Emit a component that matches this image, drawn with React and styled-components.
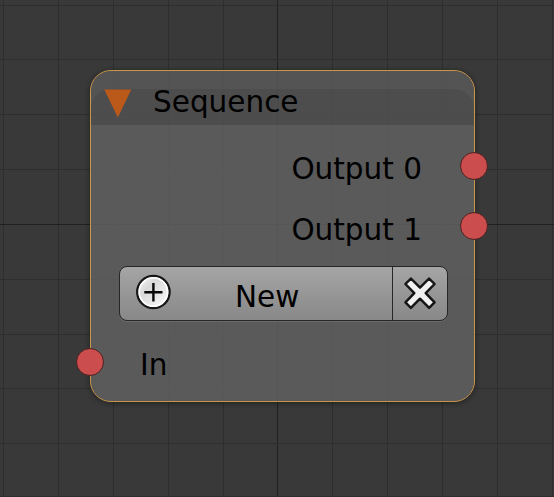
import React from "react";
import styled, { createGlobalStyle } from "styled-components";

const GlobalStyle = createGlobalStyle`
  *, *::before, *::after { box-sizing: border-box; }
  body { margin: 0; background: #393939; }
`;

const Editor = styled.main`
  position: relative;
  width: 554px;
  height: 497px;
  overflow: hidden;
  padding: 70px 0 0 90px;
  background: #393939;
  color: #000;
  font-family: "DejaVu Sans", sans-serif;
  font-size: 29.5px;
`;

const GridLines = styled.svg`
  position: absolute;
  inset: 0;
  shape-rendering: crispEdges;
`;

const Node = styled.section`
  position: relative;
  width: 385px;
  height: 332px;
  padding-top: 18px;
  border: 1px solid #c8964a;
  border-radius: 21px;
  background: rgba(97, 97, 97, 0.84);
  background-clip: padding-box;
  box-shadow: 0 1px 5px 1px rgba(0, 0, 0, 0.32);
  &::before {
    content: "";
    position: absolute;
    inset: 0 0 auto;
    height: 54px;
    border-radius: 20px 20px 0 0;
    background: rgba(0, 0, 0, 0.06);
  }
`;

const Header = styled.header`
  position: relative;
  display: flex;
  align-items: flex-start;
  height: 36px;
  padding-left: 13px;
  border-radius: 20px 20px 0 0;
  background: rgba(0, 0, 0, 0.08);
`;

const Arrow = styled.svg`
  width: 28px;
  height: 29px;
  flex: none;
`;

const Title = styled.h1`
  margin: 0 0 0 21px;
  font: inherit;
  line-height: 27px;
`;

const Body = styled.div`
  position: relative;
  display: flex;
  flex-direction: column;
  padding-top: 13px;
`;

const SocketRow = styled.div`
  position: relative;
  height: 60px;
  padding: ${(p) => p.$drop || 0}px ${(p) => (p.$side === "right" ? "52px 0 0" : "0 0 49px")};
  text-align: ${(p) => p.$side};
  line-height: 62px;
`;

const Socket = styled.i`
  position: absolute;
  top: 14px;
  ${(p) => p.$side}: ${(p) => (p.$side === "right" ? -14 : -15)}px;
  width: 28px;
  height: 28px;
  border: 1px solid #4a2222;
  border-radius: 50%;
  background: #cc4d4d;
`;

const ButtonGroup = styled.div`
  display: flex;
  height: 55px;
  margin: 8px 26px 13px 28px;
  border: 1px solid #272727;
  border-radius: 8px;
  background: linear-gradient(#a5a5a5, #888);
  box-shadow: 0 1px 0 rgba(255, 255, 255, 0.1);
`;

const Button = styled.button`
  position: relative;
  display: flex;
  align-items: flex-start;
  justify-content: flex-start;
  flex: ${(p) => (p.$width ? `0 0 ${p.$width}px` : "1")};
  height: 53px;
  margin: 0;
  padding: 0 0 0 ${(p) => p.$inset}px;
  border: 0;
  border-left: ${(p) => (p.$divided ? "1px solid #272727" : "0")};
  background: transparent;
  color: inherit;
  font: inherit;
`;

const ButtonIcon = styled.svg`
  width: ${(p) => p.$size}px;
  height: ${(p) => p.$size}px;
  margin-top: ${(p) => p.$top}px;
  flex: none;
`;

const ButtonLabel = styled.span`
  margin-left: 63px;
  line-height: 61px;
`;

const columns = [3, 58, 113, 168, 223, 277, 332, 387, 442, 497, 552];
const lines = [5, 59, 114, 169, 224, 279, 334, 388, 443, 496];

function Grid() {
  return (
    <GridLines width="554" height="497" aria-hidden="true">
      {columns.map((x) => (
        <rect key={x} x={x} width="1" height="497" fill={x === 277 ? "#202020" : "#2e2e2e"} />
      ))}
      {lines.map((y) => (
        <rect key={y} y={y} width="554" height="1" fill={y === 224 ? "#202020" : "#2e2e2e"} />
      ))}
    </GridLines>
  );
}

function Port({ side, drop, children }) {
  return (
    <SocketRow $side={side} $drop={drop}>
      {children}
      <Socket $side={side} />
    </SocketRow>
  );
}

export default function App() {
  return (
    <>
      <GlobalStyle />
      <Editor>
        <Grid />
        <Node>
          <Header>
            <Arrow viewBox="0 0 28 29" aria-hidden="true">
              <path d="M0.3 0.5h27L13.8 28.5Z" fill="#bb591b" />
            </Arrow>
            <Title>Sequence</Title>
          </Header>
          <Body>
            <Port side="right">Output 0</Port>
            <Port side="right" drop={1}>Output 1</Port>
            <ButtonGroup>
              <Button $inset={14}>
                <ButtonIcon $size={38} $top={6} viewBox="0 0 38 38" aria-hidden="true">
                  <defs>
                    <linearGradient id="disc" x1="0" y1="0" x2="1" y2="1">
                      <stop offset="0" stopColor="#fff" />
                      <stop offset="0.35" stopColor="#d8d8d8" />
                      <stop offset="1" stopColor="#fff" />
                    </linearGradient>
                  </defs>
                  <circle cx="19.4" cy="19" r="16.2" fill="url(#disc)" stroke="#171717" strokeWidth="2.3" />
                  <circle cx="19.4" cy="19" r="14.2" fill="none" stroke="#fff" strokeWidth="1.6" />
                  <path d="M19.4 10v18.4M10.3 19.2h18.2" stroke="#080808" strokeWidth="2.4" />
                </ButtonIcon>
                <ButtonLabel>New</ButtonLabel>
              </Button>
              <Button $width={55} $inset={9} $divided aria-label="Remove">
                <ButtonIcon $size={36} $top={8} viewBox="0 0 38 38" aria-hidden="true">
                  <path
                    d="M9.4 3.7 19 13.4 28.6 3.7 34.4 9.5 25 19.2 34.4 28.9 28.6 34.7 19 25 9.4 34.7 3.6 28.9 13 19.2 3.6 9.5Z"
                    fill="#f1f1f1"
                    stroke="#151515"
                    strokeWidth="2.6"
                    strokeLinejoin="round"
                  />
                </ButtonIcon>
              </Button>
            </ButtonGroup>
            <Port side="left">In</Port>
          </Body>
        </Node>
      </Editor>
    </>
  );
}
